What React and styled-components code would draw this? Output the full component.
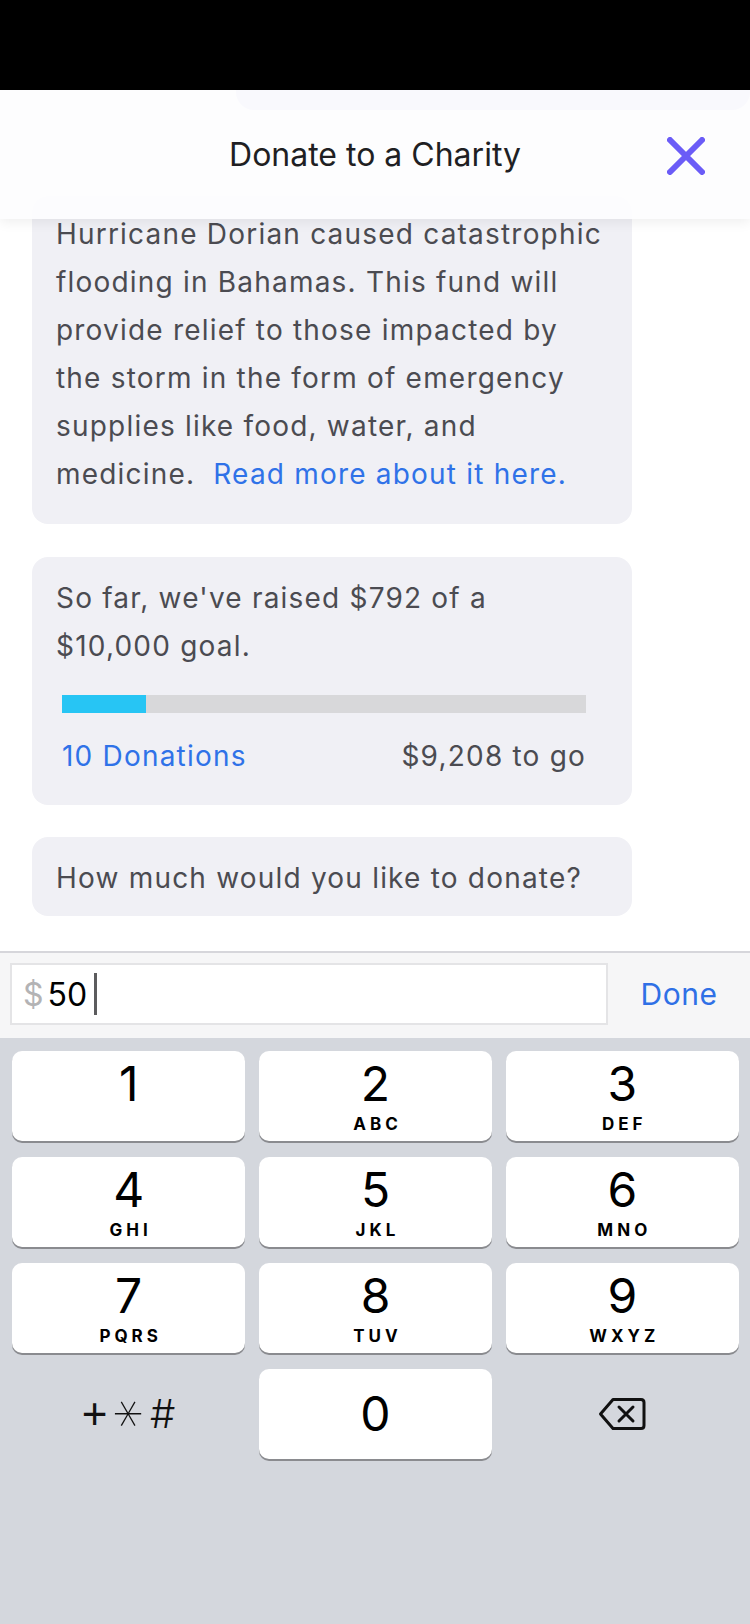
import React from "react";
import styled, { createGlobalStyle } from "styled-components";

const GlobalStyle = createGlobalStyle`
  html, body {
    margin: 0;
    padding: 0;
    background: #fff;
  }
  body {
    font-family: Inter, "Noto Sans", "Liberation Sans", sans-serif;
    -webkit-font-smoothing: antialiased;
  }
`;

const raised = 792;
const goal = 10000;
const donations = 10;

const keys = [
  { digit: "1", letters: "" },
  { digit: "2", letters: "ABC" },
  { digit: "3", letters: "DEF" },
  { digit: "4", letters: "GHI" },
  { digit: "5", letters: "JKL" },
  { digit: "6", letters: "MNO" },
  { digit: "7", letters: "PQRS" },
  { digit: "8", letters: "TUV" },
  { digit: "9", letters: "WXYZ" },
];

const fmt = (n) => "$" + n.toLocaleString("en-US");

export default function App() {
  return (
    <Phone>
      <GlobalStyle />
      <StatusBar />
      <Chat>
        <Header>
          <span />
          <Title>Donate to a Charity</Title>
          <CloseButton aria-label="Close">
            <svg width="38" height="38" viewBox="0 0 38 38">
              <path
                d="M3 3 L35 35 M35 3 L3 35"
                stroke="#6b5cf7"
                strokeWidth="6"
                strokeLinecap="round"
                fill="none"
              />
            </svg>
          </CloseButton>
        </Header>
        <Messages>
          <UserBubble />
          <Card $top={86} $pad="14px 24px 26px">
            <CardText>
              Hurricane Dorian caused catastrophic flooding in Bahamas. This
              fund will provide relief to those impacted by the storm in the
              form of emergency supplies like food, water, and medicine.
              <Link href="#">Read more about it here.</Link>
            </CardText>
          </Card>
          <Card $top={33} $pad="17px 24px 25px">
            <CardText $narrow>
              So far, we've raised {fmt(raised)} of a {fmt(goal)} goal.
            </CardText>
            <Stats>
              <Track>
                <Fill $percent={16} />
              </Track>
              <StatsRow>
                <Link as="span" $flush>
                  {donations} Donations
                </Link>
                <span>{fmt(goal - raised)} to go</span>
              </StatsRow>
            </Stats>
          </Card>
          <Card $top={32} $pad="17px 24px 14px">
            <CardText>How much would you like to donate?</CardText>
          </Card>
        </Messages>
      </Chat>
      <InputBar>
        <Field>
          <Dollar>$</Dollar>
          <Value>50</Value>
          <Caret />
        </Field>
        <Done>Done</Done>
      </InputBar>
      <Keypad>
        {keys.map((k) => (
          <Key key={k.digit}>
            <Digit>{k.digit}</Digit>
            {k.letters && <Letters>{k.letters}</Letters>}
          </Key>
        ))}
        <Key $plain $center>
          <Symbols>
            <Plus>+</Plus>
            <Asterisk>∗</Asterisk>
            <span>#</span>
          </Symbols>
        </Key>
        <Key $center>
          <Digit>0</Digit>
        </Key>
        <Key $plain $center aria-label="Delete">
          <svg width="48" height="34" viewBox="0 0 48 34">
            <path
              d="M15 2.5 H43 Q46 2.5 46 5.5 V28.5 Q46 31.5 43 31.5 H15 L2.5 17 Z"
              stroke="#111"
              strokeWidth="3"
              strokeLinejoin="round"
              fill="none"
            />
            <path
              d="M21 10 L35 24 M35 10 L21 24"
              stroke="#111"
              strokeWidth="3"
              strokeLinecap="round"
            />
          </svg>
        </Key>
      </Keypad>
    </Phone>
  );
}

const Phone = styled.div`
  width: 750px;
  height: 1624px;
  display: flex;
  flex-direction: column;
  overflow: hidden;
  background: #fff;
`;

const StatusBar = styled.div`
  flex: none;
  height: 90px;
  background: #000;
`;

const Chat = styled.div`
  position: relative;
  flex: 1;
  min-height: 0;
  overflow: hidden;
`;

const Header = styled.header`
  position: absolute;
  top: 0;
  left: 0;
  right: 0;
  z-index: 2;
  height: 129px;
  display: grid;
  grid-template-columns: 1fr auto 1fr;
  align-items: center;
  background: rgba(253, 253, 254, 0.93);
  box-shadow: 0 3px 12px rgba(0, 0, 0, 0.07);
`;

const Title = styled.h1`
  margin: 0;
  font-size: 32px;
  font-weight: 400;
  color: #1f1f23;
`;

const CloseButton = styled.button`
  justify-self: end;
  margin: 2px 45px 0 0;
  padding: 0;
  border: none;
  background: transparent;
  display: flex;
`;

const Messages = styled.div`
  display: flex;
  flex-direction: column;
  padding: 0 32px;
`;

const UserBubble = styled.div`
  align-self: flex-end;
  width: 514px;
  height: 80px;
  margin: -60px -32px 0 0;
  border-radius: 18px;
  background: #c4c3ec;
`;

const Card = styled.div`
  width: 600px;
  box-sizing: border-box;
  margin-top: ${(p) => p.$top}px;
  padding: ${(p) => p.$pad};
  border-radius: 16px;
  background: #f0f0f5;
`;

const CardText = styled.p`
  margin: 0;
  max-width: ${(p) => (p.$narrow ? "530px" : "none")};
  font-size: 28px;
  line-height: 48px;
  letter-spacing: 1.2px;
  color: #4b4b51;
`;

const Link = styled.a`
  margin-left: ${(p) => (p.$flush ? "0" : "18px")};
  white-space: nowrap;
  color: #2f72e8;
  text-decoration: none;
`;

const Stats = styled.div`
  margin: 25px 22px 0 6px;
`;

const Track = styled.div`
  height: 18px;
  background: #d8d8da;
`;

const Fill = styled.div`
  height: 100%;
  width: ${(p) => p.$percent}%;
  background: #27c5f4;
`;

const StatsRow = styled.div`
  margin-top: 19px;
  display: flex;
  justify-content: space-between;
  font-size: 28px;
  line-height: 48px;
  letter-spacing: 1.2px;
  color: #4b4b51;
`;

const InputBar = styled.div`
  flex: none;
  height: 87px;
  box-sizing: border-box;
  display: flex;
  align-items: center;
  padding: 0 0 3px 10px;
  border-top: 2px solid #d6d6db;
  background: #f6f6f7;
`;

const Field = styled.div`
  width: 598px;
  height: 62px;
  box-sizing: border-box;
  display: flex;
  align-items: center;
  padding-left: 11px;
  border: 2px solid #e4e4e6;
  background: #fff;
  font-size: 32px;
`;

const Dollar = styled.span`
  color: #b3b3b5;
  margin-right: 4px;
`;

const Value = styled.span`
  color: #000;
`;

const Caret = styled.span`
  width: 3px;
  height: 42px;
  margin-left: 7px;
  background: #5c5c5e;
`;

const Done = styled.span`
  flex: 1;
  text-align: center;
  font-size: 30px;
  letter-spacing: 0.5px;
  color: #2f70e6;
`;

const Keypad = styled.div`
  flex: none;
  height: 586px;
  box-sizing: border-box;
  display: grid;
  grid-template-columns: repeat(3, 1fr);
  grid-auto-rows: 90px;
  column-gap: 13.5px;
  row-gap: 16px;
  align-content: start;
  padding: 13px 11px 0 12px;
  background: #d4d7dd;
`;

const Key = styled.div`
  display: flex;
  flex-direction: column;
  align-items: center;
  justify-content: ${(p) => (p.$center ? "center" : "flex-start")};
  padding-top: ${(p) => (p.$center ? "0" : "8px")};
  border-radius: 10px;
  background: ${(p) => (p.$plain ? "transparent" : "#fff")};
  box-shadow: ${(p) => (p.$plain ? "none" : "0 2px 0 #8a8b8f")};
`;

const Digit = styled.span`
  font-size: 48px;
  line-height: 50px;
  color: #000;
`;

const Letters = styled.span`
  margin-top: 5px;
  padding-left: 4px;
  font-size: 17px;
  line-height: 20px;
  font-weight: 700;
  letter-spacing: 4px;
  color: #000;
`;

const Symbols = styled.div`
  display: flex;
  align-items: center;
  gap: 10px;
  font-size: 40px;
  font-weight: 300;
  line-height: 44px;
  color: #111;
`;

const Plus = styled.span`
  font-family: "Liberation Sans", sans-serif;
  font-size: 44px;
  font-weight: 400;
`;

const Asterisk = styled.span`
  display: inline-block;
  font-family: "DejaVu Sans", sans-serif;
  font-size: 36px;
  transform: rotate(90deg) scale(1.6);
`;
